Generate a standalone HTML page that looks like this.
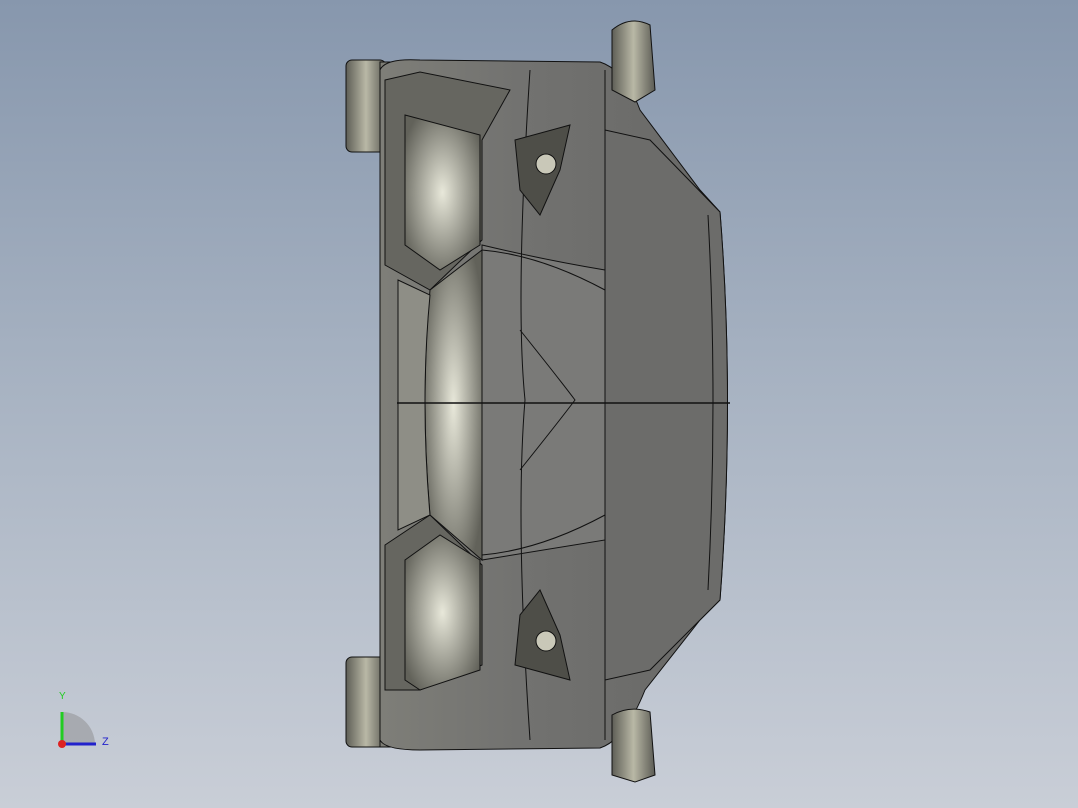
<!DOCTYPE html>
<html><head><meta charset="utf-8"><style>
html,body{margin:0;padding:0;width:1078px;height:808px;overflow:hidden}
body{background:linear-gradient(#8797ad,#a9b4c3 50%,#c9ced7)}
svg{position:absolute;left:0;top:0}
</style></head><body>
<svg width="1078" height="808" viewBox="0 0 1078 808" font-family="Liberation Sans, sans-serif">
<defs>
<linearGradient id="side" x1="0" x2="1"><stop offset="0" stop-color="#5e5e56"/><stop offset="0.5" stop-color="#b9b8a6"/><stop offset="1" stop-color="#5b5b54"/></linearGradient>
<linearGradient id="body" x1="0" x2="1"><stop offset="0" stop-color="#7e7e78"/><stop offset="0.4" stop-color="#727270"/><stop offset="1" stop-color="#686866"/></linearGradient>
<radialGradient id="hl" cx="0.5" cy="0.5" r="0.6"><stop offset="0" stop-color="#e8e8da"/><stop offset="1" stop-color="#62625a"/></radialGradient>
</defs>
<g stroke="#111" stroke-width="1">
<rect x="346" y="60" width="40" height="92" rx="6" fill="url(#side)"/>
<rect x="346" y="657" width="40" height="90" rx="6" fill="url(#side)"/>
<rect x="380" y="62" width="20" height="685" fill="#7c7c74"/>
<path d="M380 70 Q385 58 420 60 L600 62 Q625 70 640 110 L700 190 L720 212 Q735 400 720 600 L700 620 L645 690 Q625 740 600 748 L420 750 Q385 750 380 740 Z" fill="url(#body)"/>
<path d="M605 130 L650 140 L720 212 Q735 400 720 600 L650 670 L605 680 Z" fill="#6c6c6a"/>
<path d="M385 80 L420 72 L510 90 L482 140 L482 240 L430 290 L385 265 Z" fill="#666660"/>
<path d="M405 115 L480 135 L480 245 L440 270 L405 245 Z" fill="url(#hl)"/>
<path d="M385 545 L430 515 L482 565 L482 665 L420 690 L385 690 Z" fill="#666660"/>
<path d="M405 560 L440 535 L480 560 L480 670 L420 690 L405 680 Z" fill="url(#hl)"/>
<path d="M430 290 L482 250 L482 560 L430 515 Q420 400 430 290 Z" fill="url(#hl)"/>
<path d="M398 280 L430 295 Q420 400 430 515 L398 530 Z" fill="#8e8e86"/>
<path d="M482 245 Q545 260 605 270 L605 540 Q545 550 482 560 Z" fill="#7a7a78"/>
<path d="M482 250 Q540 255 605 290" fill="none"/>
<path d="M482 555 Q540 550 605 515" fill="none"/>
<path d="M530 70 Q515 300 525 400 Q515 520 530 740" fill="none"/>
<path d="M520 330 Q560 380 575 400 Q560 420 520 470" fill="none"/>
<path d="M708 215 Q718 400 708 590" fill="none"/>
<path d="M515 140 L570 125 L560 170 L540 215 L520 190 Z" fill="#4e4e48"/>
<circle cx="546" cy="164" r="10" fill="#c9c8b8"/>
<path d="M515 665 L570 680 L560 635 L540 590 L520 615 Z" fill="#4e4e48"/>
<circle cx="546" cy="641" r="10" fill="#c9c8b8"/>
<path d="M612 30 Q630 15 650 25 L655 90 L635 102 L612 90 Z" fill="url(#side)"/>
<path d="M612 715 Q630 705 650 712 L655 775 L635 782 L612 775 Z" fill="url(#side)"/>
<line x1="397" y1="403" x2="730" y2="403" stroke-width="1.5"/>
<line x1="605" y1="70" x2="605" y2="740"/>
</g>
<path d="M62 712 L62 744 L95 744 A33 33 0 0 0 62 712 Z" fill="#a0a3a8" opacity="0.8"/>
<line x1="62" y1="744" x2="62" y2="712" stroke="#2c2" stroke-width="3"/>
<line x1="62" y1="744" x2="96" y2="744" stroke="#22c" stroke-width="3"/>
<circle cx="62" cy="744" r="4" fill="#d22"/>
<text x="59" y="699" font-size="10" fill="#2c2">Y</text>
<text x="102" y="745" font-size="11" fill="#22c">Z</text>
</svg>
</body></html>
